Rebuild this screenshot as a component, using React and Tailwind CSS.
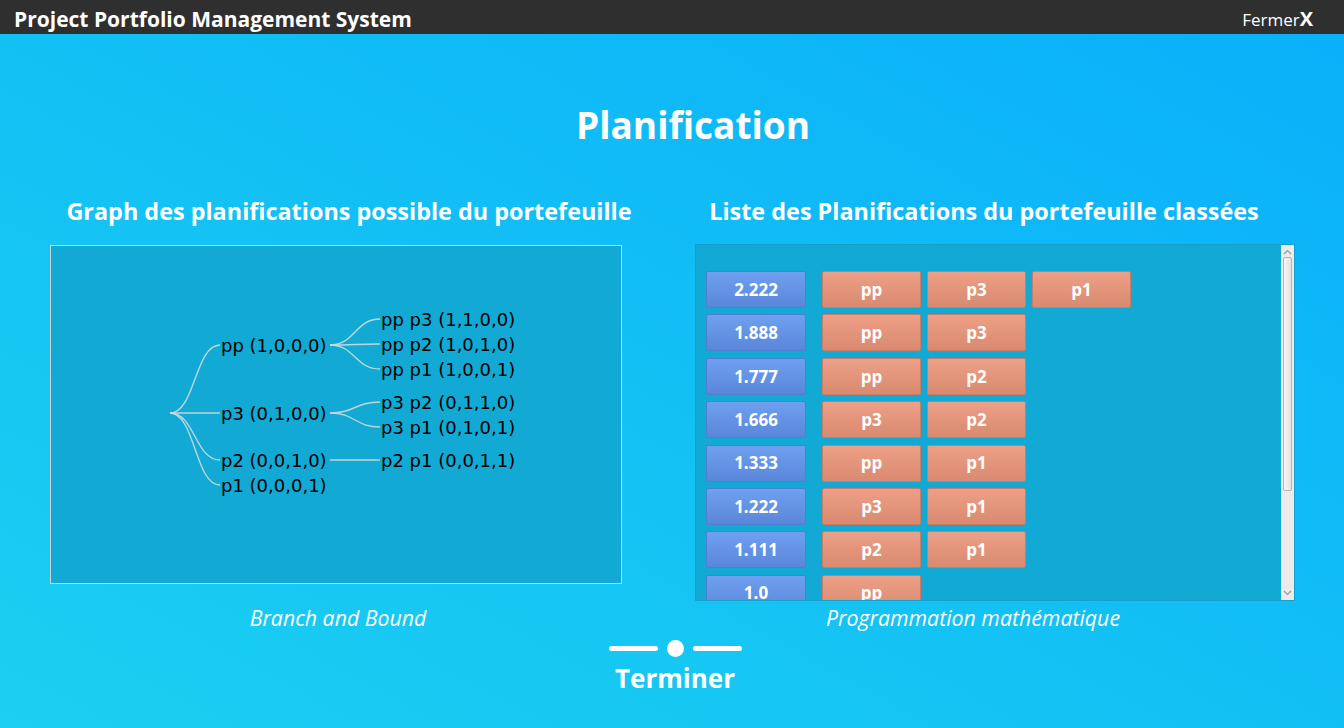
import React from "react";

const rows = [
  ["2.222", ["pp", "p3", "p1"]],
  ["1.888", ["pp", "p3"]],
  ["1.777", ["pp", "p2"]],
  ["1.666", ["p3", "p2"]],
  ["1.333", ["pp", "p1"]],
  ["1.222", ["p3", "p1"]],
  ["1.111", ["p2", "p1"]],
  ["1.0", ["pp"]],
];

function curve(x0, y0, x1, y1) {
  const xm = (x0 + x1) / 2;
  return `M${x0} ${y0} C${xm} ${y0}, ${xm} ${y1}, ${x1} ${y1}`;
}

function Graph() {
  const root = [119, 167];
  const l1 = [
    ["pp (1,0,0,0)", 99],
    ["p3 (0,1,0,0)", 167],
    ["p2 (0,0,1,0)", 214],
    ["p1 (0,0,0,1)", 239],
  ];
  const l2 = [
    ["pp p3 (1,1,0,0)", 73, 99],
    ["pp p2 (1,0,1,0)", 98, 99],
    ["pp p1 (1,0,0,1)", 123, 99],
    ["p3 p2 (0,1,1,0)", 156, 167],
    ["p3 p1 (0,1,0,1)", 181, 167],
    ["p2 p1 (0,0,1,1)", 214, 214],
  ];
  return (
    <svg className="absolute inset-0" width="570" height="337" viewBox="0 0 570 337">
      <g fill="none" stroke="#cfdbdd" strokeWidth="1.4" strokeOpacity="0.9">
        {l1.map(([, y], i) => (
          <path key={i} d={curve(root[0], root[1], 169, y)} />
        ))}
        {l2.map(([, y, py], i) => (
          <path key={i} d={curve(279, py, 329, y)} />
        ))}
      </g>
      <g fill="#000" fontFamily="'DejaVu Sans', sans-serif" fontSize="18">
        {l1.map(([t, y], i) => (
          <text key={i} x="170" y={y} dominantBaseline="central">{t}</text>
        ))}
        {l2.map(([t, y], i) => (
          <text key={i} x="330" y={y} dominantBaseline="central">{t}</text>
        ))}
      </g>
    </svg>
  );
}

function BlueBtn({ children }) {
  return (
    <div className="w-[100px] h-[37px] shrink-0 rounded-[2px] border border-[#4f7fd0] bg-[linear-gradient(to_bottom,#6fa0f0,#5a86da)] flex items-center justify-center text-white font-bold text-[17px]">
      {children}
    </div>
  );
}

function OrangeBtn({ children }) {
  return (
    <div className="w-[99px] h-[37px] shrink-0 rounded-[2px] border border-[#cd7b62] bg-[linear-gradient(to_bottom,#eca087,#d98a70)] flex items-center justify-center text-white font-bold text-[17px]">
      {children}
    </div>
  );
}

export default function App() {
  return (
    <div
      className="w-[1344px] h-[728px] overflow-hidden flex flex-col bg-[linear-gradient(to_top_right,#1bd0f0,#0aaffa)] text-white"
      style={{ fontFamily: "'Open Sans', 'Noto Sans', sans-serif" }}
    >
      <div className="h-[34px] shrink-0 bg-[#2f2f2f] flex items-center justify-between pl-[14px] pr-[31px] pt-[4px]">
        <div className="font-bold text-[21px] leading-none">Project Portfolio Management System</div>
        <div className="flex items-baseline leading-none">
          <span className="text-[17px]">Fermer</span>
          <span className="font-bold text-[20px]">X</span>
        </div>
      </div>

      <div className="mt-[65px] pl-[42px] text-center font-bold text-[37px] leading-[52px]">Planification</div>

      <div className="mt-[45px] flex">
        <div className="w-[698px] text-center font-bold text-[23.4px] leading-[30px]">
          Graph des planifications possible du portefeuille
        </div>
        <div className="w-[572px] text-center font-bold text-[23.4px] leading-[30px]">
          Liste des Planifications du portefeuille classées
        </div>
      </div>

      <div className="mt-[18px] flex items-start">
        <div className="ml-[50px] mt-[1px] w-[572px] h-[339px] border border-[#c9d3d6] bg-[#12aad5] relative">
          <Graph />
        </div>
        <div className="ml-[73px] w-[600px] h-[357px] border border-[#14a0cc] bg-[#12aad5] relative overflow-hidden flex">
          <div className="flex-1 pt-[26px] pl-[10px] flex flex-col gap-[6.4px]">
            {rows.map(([n, ps]) => (
              <div key={n} className="flex">
                <BlueBtn>{n}</BlueBtn>
                <div className="ml-[16px] flex gap-[6px]">
                  {ps.map((p, i) => (
                    <OrangeBtn key={i}>{p}</OrangeBtn>
                  ))}
                </div>
              </div>
            ))}
          </div>
          <div className="w-[13px] h-full bg-[#ebebeb] flex flex-col items-center relative">
            <svg width="9" height="6" viewBox="0 0 9 6" className="mt-[4px]">
              <path d="M1 5 L4.5 1.5 L8 5" fill="none" stroke="#9a9a9a" strokeWidth="1.2" />
            </svg>
            <div className="mt-[2px] w-[9px] h-[234px] rounded-[2px] border border-[#b5b5b5] bg-[linear-gradient(to_right,#f6f6f6,#e2e2e2)]" />
            <div className="flex-1" />
            <svg width="9" height="6" viewBox="0 0 9 6" className="mb-[4px]">
              <path d="M1 1 L4.5 4.5 L8 1" fill="none" stroke="#9a9a9a" strokeWidth="1.2" />
            </svg>
          </div>
        </div>
      </div>

      <div className="mt-[3px] flex">
        <div className="w-[676px] text-center italic text-[21.3px] leading-[28px]">Branch and Bound</div>
        <div className="w-[600px] text-center italic text-[21.3px] leading-[28px] pr-[6px]">
          Programmation mathématique
        </div>
      </div>

      <div className="mt-[8px] flex flex-col items-center ml-[6px]">
        <div className="flex items-center gap-[9px]">
          <div className="w-[49px] h-[5px] rounded-full bg-white" />
          <div className="w-[17px] h-[17px] rounded-full bg-white" />
          <div className="w-[49px] h-[5px] rounded-full bg-white" />
        </div>
        <div className="font-bold text-[26px] leading-[34px] mt-[4px]">Terminer</div>
      </div>
    </div>
  );
}
